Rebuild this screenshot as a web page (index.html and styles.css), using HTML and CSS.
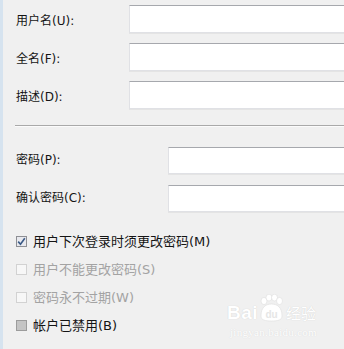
FILE: index.html
```html
<!DOCTYPE html>
<html lang="zh-CN">

<head>
  <meta charset="UTF-8">
  <meta name="viewport" content="width=device-width, initial-scale=1.0">
  <title>新用户</title>
  <link rel="stylesheet" href="styles.css">
</head>

<body>
  <div class="dialog">
    <div class="fields fields-top">
      <label class="label">用户名(U):</label>
      <div class="textbox"></div>
      <label class="label">全名(F):</label>
      <div class="textbox"></div>
      <label class="label">描述(D):</label>
      <div class="textbox"></div>
    </div>

    <div class="separator"></div>

    <div class="fields fields-pass">
      <label class="label">密码(P):</label>
      <div class="textbox"></div>
      <label class="label">确认密码(C):</label>
      <div class="textbox"></div>
    </div>

    <div class="options">
      <div class="option">
        <span class="box box-checked">
          <svg width="9" height="9" viewBox="0 0 9 9"><path d="M1.2 4.6 L3.5 7.2 L7.8 1.2" fill="none" stroke="#3b5a86" stroke-width="1.6"/></svg>
        </span>
        <span>用户下次登录时须更改密码(M)</span>
      </div>
      <div class="option option-disabled">
        <span class="box"></span>
        <span>用户不能更改密码(S)</span>
      </div>
      <div class="option option-disabled">
        <span class="box"></span>
        <span>密码永不过期(W)</span>
      </div>
      <div class="option">
        <span class="box box-hover"></span>
        <span>帐户已禁用(B)</span>
      </div>
    </div>

    <!-- watermark from the source screenshot -->
    <div class="watermark">
      <div class="wm-logo">
        <span class="wm-bai">Bai</span>
        <svg class="wm-paw" width="27" height="28" viewBox="0 0 27 28">
          <ellipse cx="6" cy="7" rx="3" ry="3.6" fill="#fff" stroke="#ddd" stroke-width="0.6"/>
          <ellipse cx="11" cy="3.6" rx="3" ry="3.4" fill="#fff" stroke="#ddd" stroke-width="0.6"/>
          <ellipse cx="16.5" cy="3.6" rx="3" ry="3.4" fill="#fff" stroke="#ddd" stroke-width="0.6"/>
          <ellipse cx="21.5" cy="7" rx="3" ry="3.6" fill="#fff" stroke="#ddd" stroke-width="0.6"/>
          <path d="M3 22 C3 13 8 10 13.5 10 C19 10 24 13 24 22 C24 26 20 27 13.5 27 C7 27 3 26 3 22 Z" fill="#fff" stroke="#ddd" stroke-width="0.6"/>
          <text x="13.5" y="24" text-anchor="middle" font-family="Liberation Sans, sans-serif" font-weight="bold" font-size="10" fill="#e6e6e6">du</text>
        </svg>
        <span class="wm-jy">经验</span>
      </div>
      <div class="wm-url">jingyan.baidu.com</div>
    </div>
  </div>
</body>

</html>
```

FILE: styles.css
```css
body {
  margin: 0;
  padding: 0;
  background: #f0f0f0;
  font-family: "DejaVu Sans", "Noto Sans CJK SC", sans-serif;
  color: #141414;
}

.dialog {
  position: relative;
  height: 349px;
  box-sizing: border-box;
  border-left: 3px solid #d6e3ef;
  padding: 5px 0 0 13px;
  overflow: hidden;
}

.fields {
  display: grid;
  align-items: center;
}

.fields-top {
  grid-template-columns: 113px 1fr;
  grid-auto-rows: 28px;
  row-gap: 10px;
}

.fields-top .label {
  padding-top: 4px;
}

.fields-pass {
  grid-template-columns: 152px 1fr;
  grid-auto-rows: 27px;
  row-gap: 11px;
}

.label {
  font-size: 12px;
  line-height: 15px;
}

.textbox {
  height: 100%;
  box-sizing: border-box;
  background: #fff;
  border: 1px solid #e0e1e5;
  border-top-color: #a6a8ad;
  border-right: none;
  box-shadow: 0 1px 0 #e4e4e4;
}

.separator {
  margin: 16px 0 20px -1px;
  border-top: 1px solid #a9a9a9;
  border-bottom: 1px solid #fbfbfb;
}

.options {
  display: flex;
  flex-direction: column;
  gap: 13px;
  margin-top: 22px;
}

.option {
  display: flex;
  align-items: center;
  gap: 6px;
  font-size: 13px;
  line-height: 15px;
  color: #141414;
}

.option-disabled {
  color: #a3a3a3;
}

.box {
  width: 11px;
  height: 11px;
  box-sizing: border-box;
  border: 1px solid #d2d2d2;
  background: #f7f7f7;
  display: flex;
  align-items: center;
  justify-content: center;
}

.box-checked {
  border-color: #8e8f94;
  background: #e8e9ee;
}

.box-hover {
  border-color: #9c9c9c;
  background: #c4c4c4;
}

.watermark {
  position: absolute;
  left: 224px;
  top: 294px;
  color: #fff;
}

.wm-logo {
  display: flex;
  align-items: flex-end;
}

.wm-bai {
  font-family: "Liberation Sans", sans-serif;
  font-weight: bold;
  font-size: 19px;
  line-height: 19px;
  letter-spacing: 0.5px;
  text-shadow: 0 0 1px #c8c8c8;
}

.wm-jy {
  font-family: "Noto Sans CJK SC", sans-serif;
  font-size: 15px;
  line-height: 18px;
  margin-left: 1px;
  text-shadow: 0 0 1px #c8c8c8;
}

.wm-url {
  font-family: "Liberation Serif", serif;
  font-size: 11px;
  line-height: 12px;
  margin-top: 4px;
  margin-left: 3px;
  letter-spacing: 0.3px;
  text-shadow: 0 0 1px #cfcfcf;
}
```
